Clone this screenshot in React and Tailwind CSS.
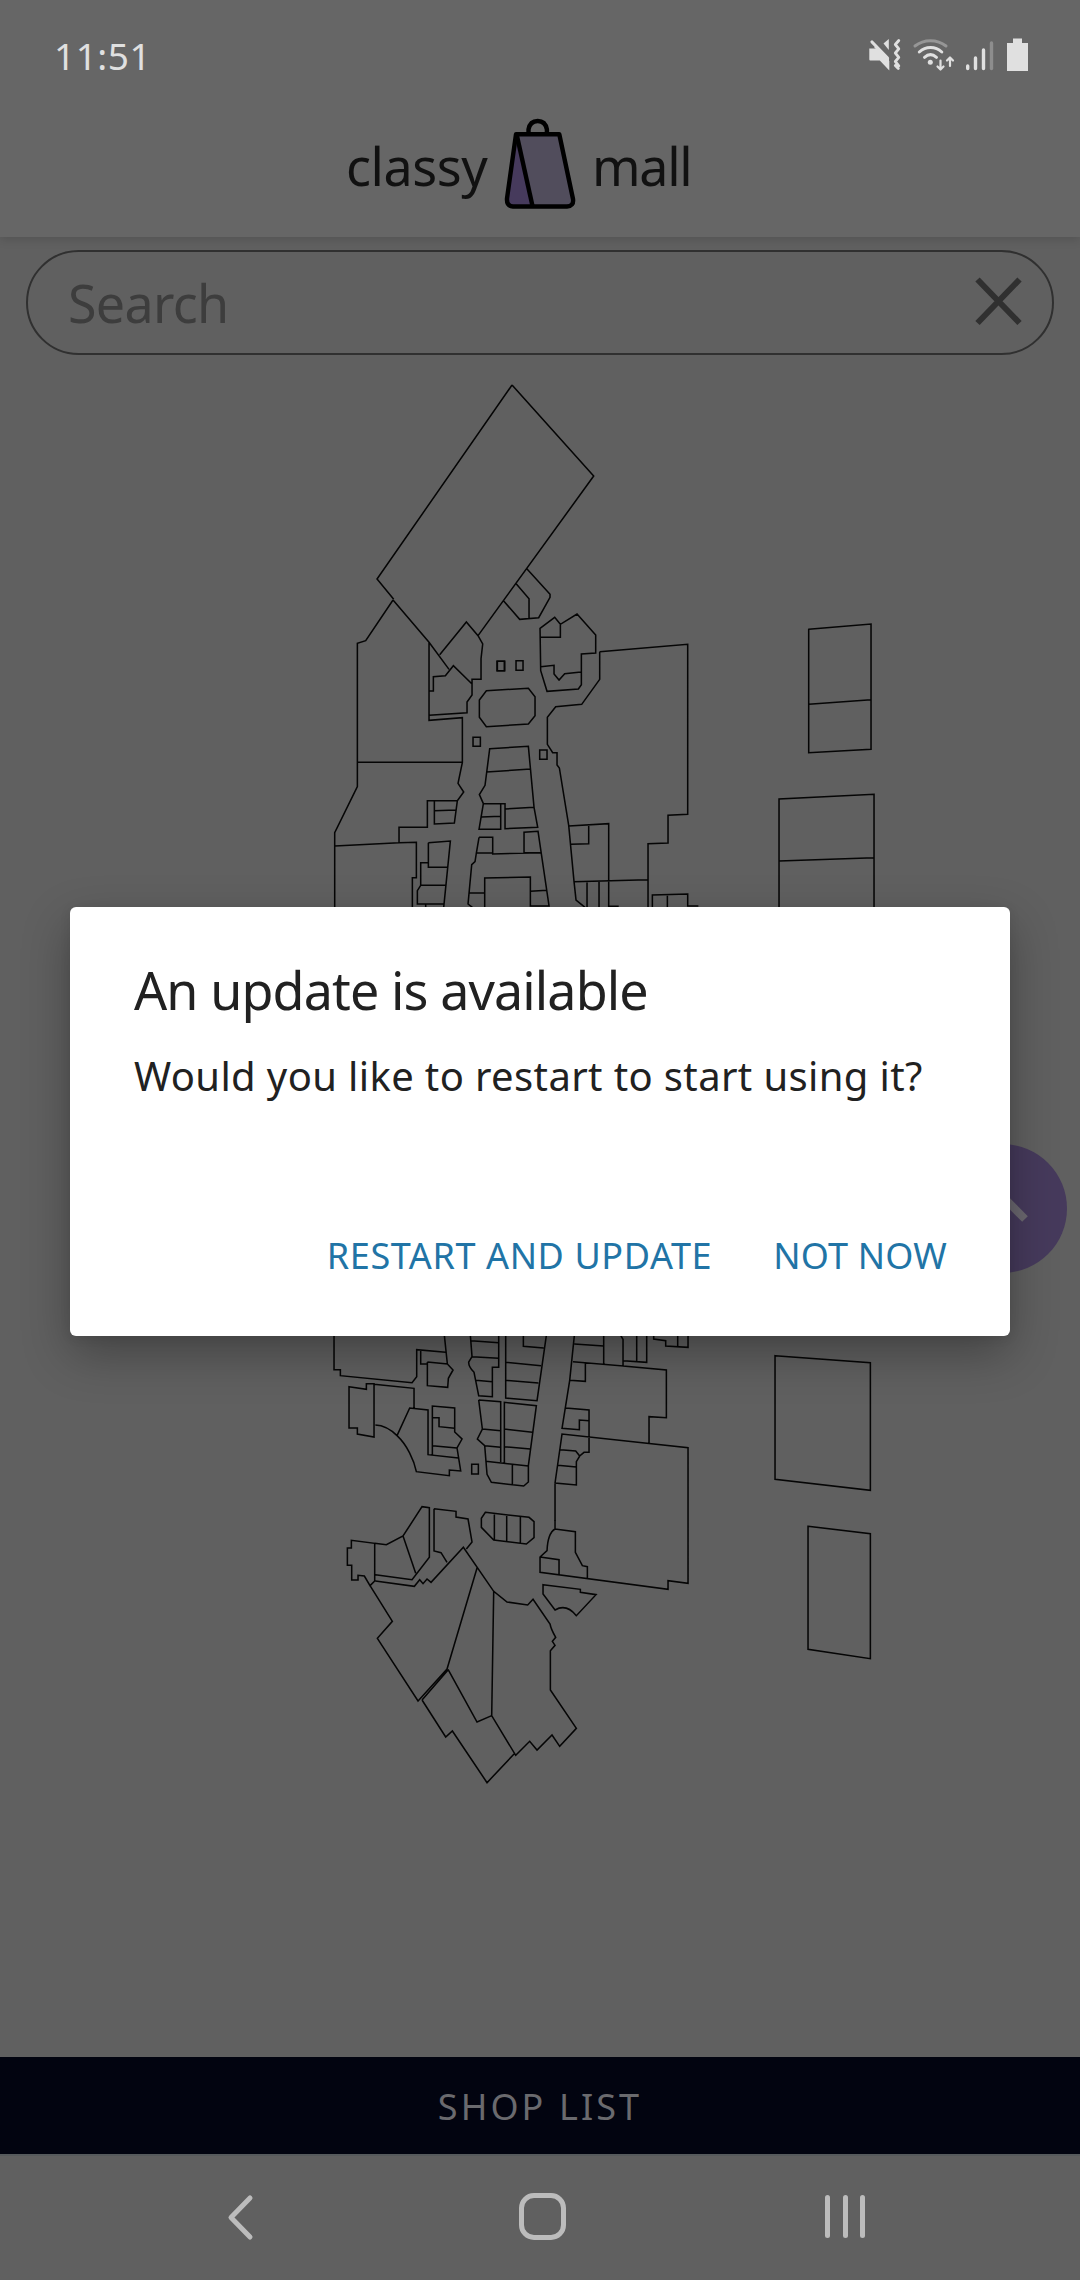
import React from "react";

const MAP_SECTIONS = [
  {
    at: "translate(320 370) scale(0.33333)",
    d: "M577 45L822 318L475 797M577 45L172 627L222 688M622 597L691 673V682L657 743L600 748L552 693M590 642L628 686V745",
  },
  {
    at: "translate(320 590) scale(0.33333)",
    d: "M220 30L328 157L388 238M220 30L138 152L113 160V590L45 728V952M328 157V391L428 383V517L415 580L432 606L413 632H323V712H238V758M113 517H428M360 194L440 96L475 137L489 162L484 206V268H457V315L442 336V368L328 376M328 303H341V260L377 257L401 227L457 282M532 214h22v28h-22zM460 442h22v27h-22zM45 768L238 758L290 757V863H278V952M344 632V702L404 699L413 632M344 662L410 660M326 758L392 753L372 952M326 758V832H382M326 818H303V886H378M303 886L293 902V942H372M318 942V952",
  },
  {
    at: "translate(460 590) scale(0.33333)",
    d: "M241 115L285 82L302 103L352 72L408 135V189L365 192V284L356 297L262 304L243 242ZM302 103V142H241M243 230L283 226V252L298 270L315 251L364 246M113 214h22v28h-22zM169 212h21v29h-21zM240 480h22v28h-22zM80 302L206 295L226 320V377L206 402L80 410L59 382V330ZM420 185L684 163V673L625 676V759L565 761V952M420 185V268L366 343L288 350L263 382V463L279 488H292V525L299 534L327 706L343 875L349 930L376 952M90 476L206 469L223 652L234 712L136 716V641H71L59 614L76 586ZM80 546L213 537M136 657L223 652M71 641L58 718H123V641M65 681L123 679M58 742H99V792L243 788M58 742L50 789H99M50 789L46 815L36 824L25 942L38 952M243 788H193V727L235 724L268 948H212V861L75 864V952M28 909H75M212 904L262 901M327 708L447 701V952M333 763L387 761V706M343 875L563 869M382 875V952M418 875V952M578 952V915L684 912V948H716M623 915V952M447 949h30",
  },
  {
    at: "translate(740 600) scale(0.33333)",
    d: "M207 88L394 72V448L207 458ZM207 313L394 299M118 925V597L403 583V925M118 783L403 773",
  },
  {
    at: "translate(320 1320) scale(0.33333)",
    d: "M43 46V149H62V167L277 188L291 170V89L378 97M374 46L383 132L400 150L386 175L384 202L323 197V126M303 89V132H323M323 126L384 132M88 200L140 208V191H163V351L113 342V324H88ZM163 193L283 205V264M167 315C190 316 215 330 232 347C262 375 283 420 290 455L389 467V450L423 453L412 384L427 357L405 336V264L338 258V404M232 347L270 264L325 270V404L416 414M338 293H358V320L405 325M338 377L412 384M456 433h20v29h-20zM452 46L457 110L447 126Q446 140 463 157L477 227L518 230V142H537V46M454 62L537 68M457 110L537 115M468 181L518 185M558 46V234L652 242L680 46M611 46V79L672 84M560 127L664 137M558 181L656 189M477 240L543 245V426M477 240L488 327L473 357L495 377L502 463L515 487L612 498L626 486V437L650 257L554 247V429M488 327L543 332M554 327L638 337M495 377L543 382M554 380L632 387M498 424L626 438M578 432V494M764 46L750 181L727 325L779 329V300L808 302M764 72L852 78M852 46V132M760 125L910 138V58L903 46M797 130V184L750 181M910 138L1040 150V293L988 290V368M738 264L808 270V397H793L780 408L770 425V495L706 489L727 342L1105 383V600M706 489V602M722 389L768 393L780 408M714 436L770 441M951 46V122M911 122L981 127V46M1002 46V57L1038 62V78L1105 82V46M1074 46V78",
  },
  {
    at: "translate(320 1480) scale(0.33333)",
    d: "M706 120V147M1105 120V310L1045 302V328L661 277V231L682 212Q684 160 706 147L767 155V217L788 257L803 260V293M661 231L718 239V283M670 314L782 328V337L829 344L770 407Q740 370 706 390L670 342ZM497 97L628 112L643 125V173L620 192L522 180L485 142V115ZM524 101V180M561 104V184M602 110V188M83 204H95V181L165 190V303L151 317L134 288L115 286V300H96V256H83ZM165 190L200 194L250 168L307 80L329 83V232L277 299L167 284M250 168L288 280M343 86L409 94V111L445 117L457 186L440 207M343 86V213L364 218L382 247M167 303L284 319L300 299L310 311L322 297L334 307L431 202L522 334L562 366L624 375L640 358L691 432Q694 448 708 472L698 484L706 496L692 512V630L770 745L720 799L697 765L652 810L630 784L588 826L516 707L472 726L385 568M151 317L218 424L173 475L295 663L382 567L472 264M522 334L516 707M307 660L385 570M307 660L378 771L398 753L502 908L583 822",
  },
  {
    at: "translate(740 1120) scale(0.33333)",
    d: "M106 707L392 728V1111L106 1078ZM205 1219L392 1241V1616L205 1588Z",
  },
];

function StatusIcons() {
  return (
    <svg className="h-[40px] w-[170px]" viewBox="865 34 170 40" fill="none">
      <g fill="#e0e0e0">
        <path d="M869.300 48.500h7l13 12.500v9.500l-9.500-10h-9.500q-1 0-1-1z" />
        <path d="M883.500 43.500l5.300-4.500v11z" />
        <path d="M874 47l15 16v-4l-12-13z" />
      </g>
      <g stroke="#e0e0e0" strokeWidth="3.200" strokeLinecap="round" strokeLinejoin="round">
        <path d="M872 42L887.500 58" />
        <path d="M898.800 40.500l-3.500 4 3.500 4.300-3.500 4.200 3.500 4.300-3.500 4.200 3.500 4.300-3 0M895.300 65.500l3 3" strokeWidth="2.800" />
      </g>
      <path d="M915 46c9-7 22-7 31 0" stroke="#969696" strokeWidth="3" strokeLinecap="round" />
      <g stroke="#e0e0e0" strokeWidth="3" strokeLinecap="round">
        <path d="M919.300 52c6.500-6 16-6 22.500 0M924.500 57.300c4-3.500 8-3.500 12 0" />
        <path d="M940.500 60.500v8.500M937.500 66.500l3 3 3-3M950 66v-8M947 60.500l3-3 3 3" strokeWidth="2.200" strokeLinejoin="round" />
      </g>
      <circle cx="930.300" cy="62.300" r="2.500" fill="#e0e0e0" />
      <g strokeWidth="3.400" strokeLinecap="round" stroke="#e0e0e0">
        <path d="M967.700 66v2.500M975.500 58v10.500M983.500 50v18.500" />
        <path d="M991.500 43v25.500" stroke="#8d8d8d" />
      </g>
      <path d="M1013 38.500h9v4.500h6v28h-21v-28h6z" fill="#e0e0e0" />
    </svg>
  );
}

function BagLogo() {
  return (
    <svg className="h-[96px] w-[76px] shrink-0" viewBox="503 116 76 96" fill="none">
      <path d="M516 134L507 200q-.5 6.500 5 7h21z" fill="#463a5c" />
      <path d="M516 134h44l13.500 65q1 7-5 8h-36z" fill="#514d5c" />
      <g stroke="#000" strokeWidth="4.400" strokeLinejoin="round">
        <path d="M516 134.200H559.300L573 199q1 7-6 7.500H513q-6.500-.5-6-8z" />
        <path d="M517 136L532.500 206" />
        <path d="M528.500 133v-3.500q1.500-8.500 9.200-8.500t9.200 8.500v3.500" />
      </g>
    </svg>
  );
}

export default function App() {
  return (
    <div className="relative flex h-[2280px] w-[1080px] flex-col overflow-hidden bg-[#606060] font-['Noto_Sans',sans-serif]">
      <header className="relative z-10 flex h-[237px] shrink-0 flex-col bg-[#666666] shadow-[0_3px_9px_rgba(0,0,0,0.13)]">
        <div className="flex h-[88px] items-end justify-between pr-[45px] pl-[54px]">
          <span className="mb-[7px] text-[37px] leading-[50px] tracking-[0.5px] text-[#e0e0e0]">11:51</span>
          <div className="mb-[14px]">
            <StatusIcons />
          </div>
        </div>
        <div className="flex h-[149px] pl-[346px]">
          <span className="mt-[43px] w-[157px] text-[52px] leading-[70px] tracking-[-0.4px] text-[#111]">classy</span>
          <div className="mt-[28px]">
            <BagLogo />
          </div>
          <span className="mt-[43px] ml-[13px] text-[52px] leading-[70px] tracking-[-1.3px] text-[#111]">mall</span>
        </div>
      </header>

      <main className="flex min-h-0 flex-1 flex-col">
        <div className="mt-[13px] mr-[26px] ml-[26px] flex h-[105px] shrink-0 items-center justify-between rounded-full border-2 border-[#303030] pr-[28px] pl-[40px]">
          <span className="mt-px text-[52px] leading-[70px] tracking-[-0.7px] text-[#3d3d3d]">Search</span>
          <svg className="mb-[3px] h-[52px] w-[52px]" viewBox="0 0 52 52" stroke="#303030" strokeWidth="6">
            <path d="M5.500 4.500L47.500 48M47.500 4.500L5.500 48" />
          </svg>
        </div>
        <svg className="h-[1702px] w-[1080px] shrink-0" viewBox="0.300 355 1080 1702" fill="none" stroke="#050505">
          {MAP_SECTIONS.map((s) => (
            <path key={s.at} transform={s.at} d={s.d} strokeWidth="4.600" />
          ))}
        </svg>
      </main>

      <div className="flex h-[97px] shrink-0 items-center justify-center bg-[#020410] pt-[3px] text-[36px] tracking-[3.1px] text-[#6a6a6e]">
        SHOP LIST
      </div>
      <nav className="flex h-[126px] shrink-0 items-center justify-between border-t-2 border-[#565a5c] pr-[209px] pb-[3px] pl-[216px]">
        <svg className="h-[50px] w-[50px]" viewBox="0 0 50 50" fill="none" stroke="#bcbcbc" strokeWidth="5" strokeLinecap="round" strokeLinejoin="round">
          <path d="M34 6L15 25.500L34 45" />
        </svg>
        <div className="h-[47px] w-[47px] rounded-[15px] border-[5px] border-[#bcbcbc]" />
        <div className="flex h-[43px] w-[52px] justify-center gap-[12.500px]">
          <span className="w-[5px] rounded-full bg-[#bcbcbc]" />
          <span className="w-[5px] rounded-full bg-[#bcbcbc]" />
          <span className="w-[5px] rounded-full bg-[#bcbcbc]" />
        </div>
      </nav>

      <div className="absolute top-[1144px] left-[938px] flex h-[129px] w-[129px] items-center justify-center rounded-full bg-[#463a5c]">
        <svg className="mr-[3px] mb-[4px] h-[60px] w-[60px]" viewBox="0 0 60 60" fill="none" stroke="#6b6870" strokeWidth="8">
          <path d="M6 42L30 18L54 42" />
        </svg>
      </div>

      <div
        role="dialog"
        className="absolute top-[907px] left-[70px] z-20 flex h-[429px] w-[940px] flex-col rounded-[6px] bg-white pl-[64px] shadow-[0_18px_48px_rgba(0,0,0,0.3),0_2px_12px_rgba(0,0,0,0.08)]"
      >
        <h1 className="mt-[48px] text-[52px] leading-[70px] tracking-[-0.88px] whitespace-nowrap text-[#212121]">
          An update is available
        </h1>
        <p className="mt-[23px] text-[40px] leading-[56px] tracking-[0.37px] whitespace-nowrap text-[#212121]">
          Would you like to restart to start using it?
        </p>
        <div className="mt-auto mb-[55px] flex justify-end gap-[61px] pr-[63px] text-[36px] leading-[50px] whitespace-nowrap text-[#2174a6]">
          <button className="tracking-[0.6px]">RESTART AND UPDATE</button>
          <button className="tracking-[0.2px]">NOT NOW</button>
        </div>
      </div>
    </div>
  );
}
